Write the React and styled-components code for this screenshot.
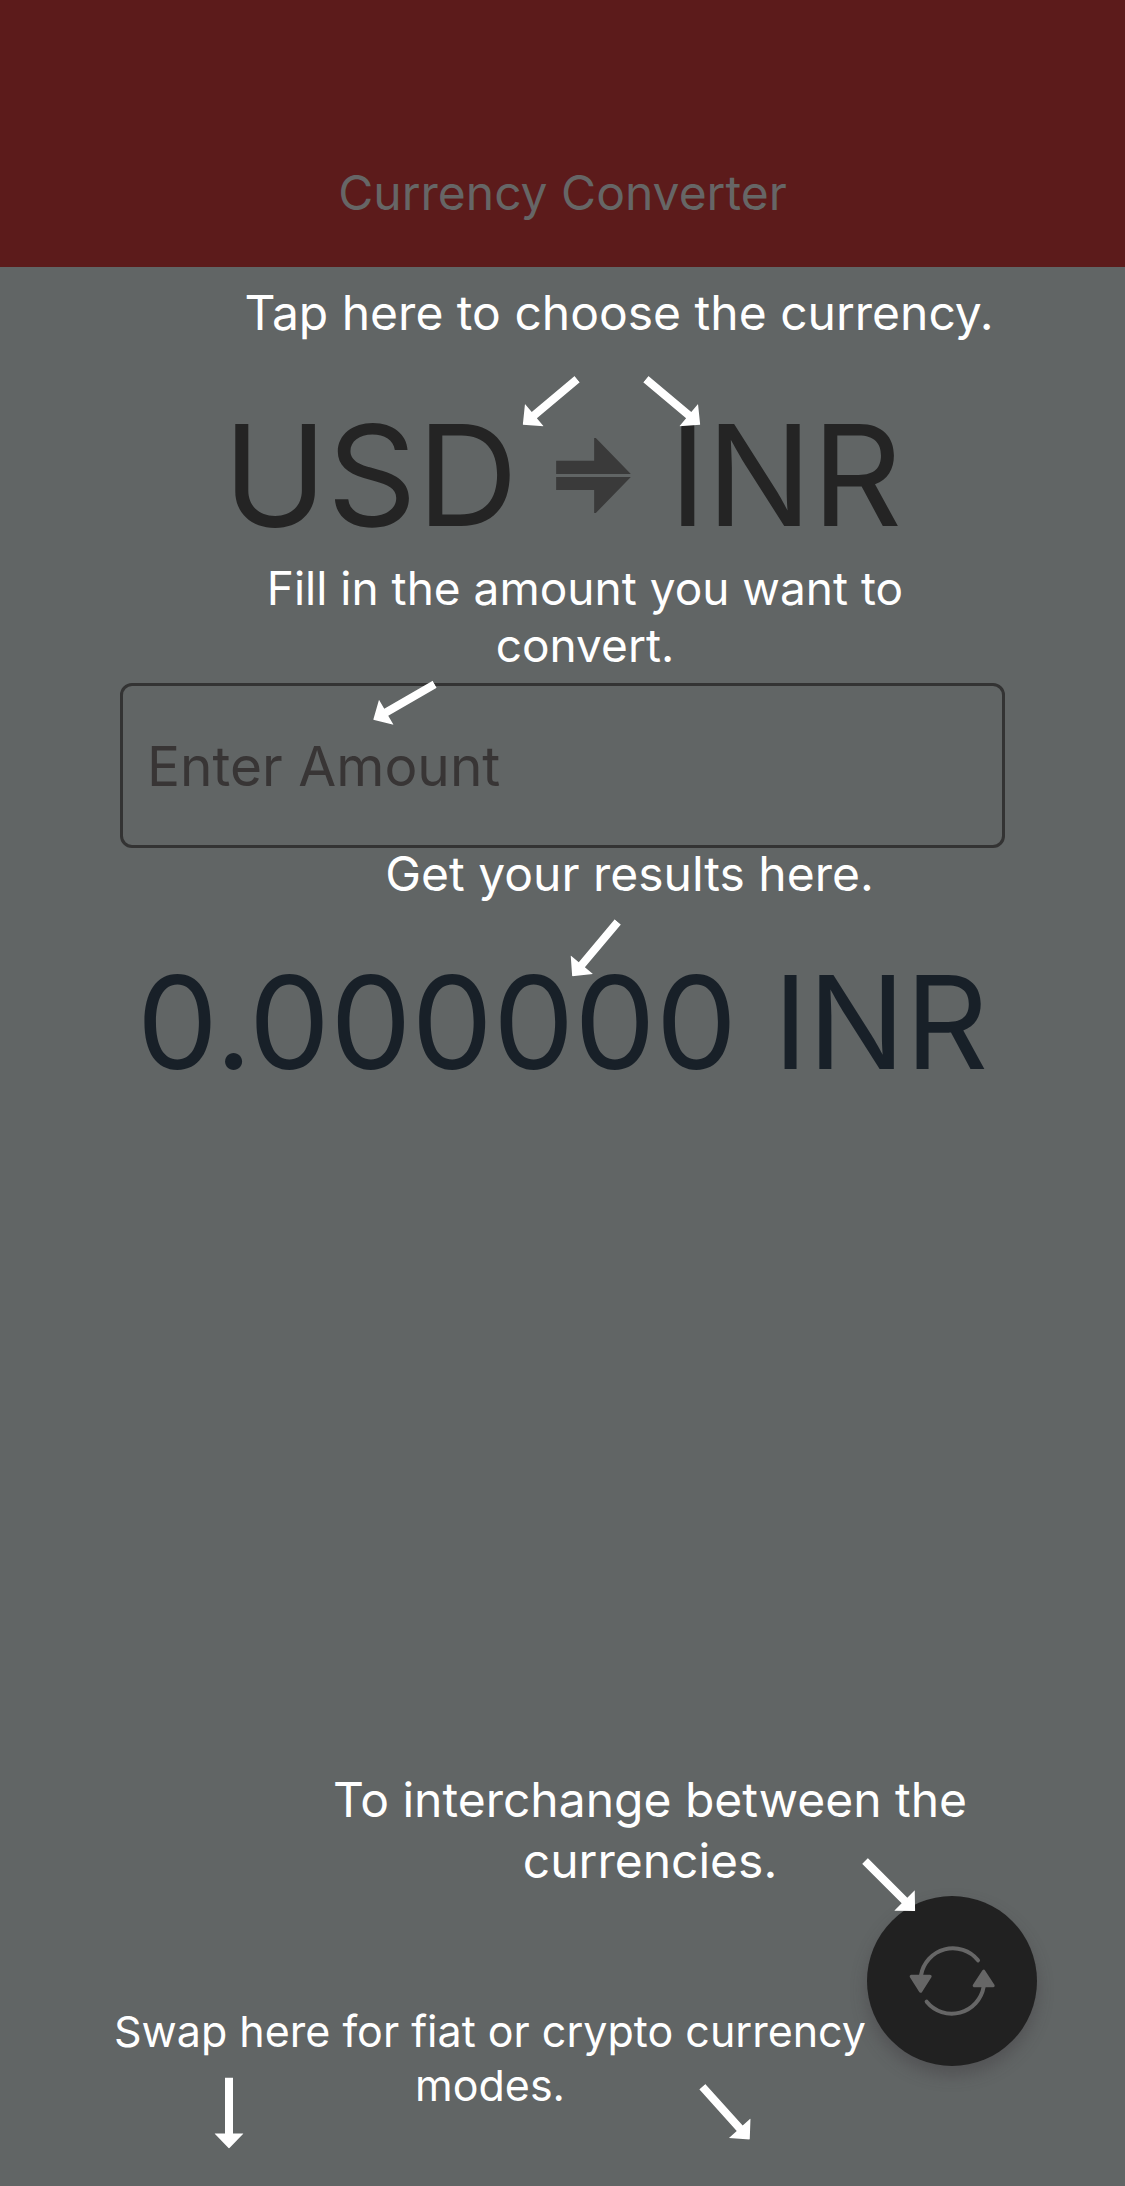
import React from "react";
import styled, { createGlobalStyle } from "styled-components";

const GlobalStyle = createGlobalStyle`
  *, *::before, *::after { box-sizing: border-box; }
  body {
    margin: 0;
    background: #616565;
    font-family: Inter, "Liberation Sans", sans-serif;
  }
  button, input { font: inherit; }
`;

const Screen = styled.div`
  display: flex;
  flex-direction: column;
  min-height: 100vh;
  background: #616565;
  color: #ffffff;
`;

const Header = styled.header`
  padding: 163px 24px 44px;
  background: #5c1b1b;
  text-align: center;
`;

const Title = styled.h1`
  margin: 0;
  font-size: 48px;
  line-height: 60px;
  font-weight: 400;
  color: #666666;
`;

const Main = styled.main`
  display: flex;
  flex: 1;
  flex-direction: column;
`;

const Hint = styled.p`
  position: relative;
  margin: ${(p) => p.$top || 0}px 0 0;
  padding-left: ${(p) => p.$shift || 0}px;
  font-size: ${(p) => p.$size || 48}px;
  line-height: ${(p) => p.$line || 60}px;
  text-align: center;
  white-space: nowrap;
`;

const PointerSvg = styled.svg`
  position: absolute;
  top: ${(p) => p.$y}px;
  left: calc(50% + ${(p) => p.$x}px);
  width: 29px;
  height: 71px;
  z-index: 1;
  transform: translate(-50%, -50%) rotate(${(p) => p.$angle}deg);
  pointer-events: none;
`;

function Pointer({ x, y, angle }) {
  return (
    <PointerSvg $x={x} $y={y} $angle={angle} viewBox="0 0 29 71" aria-hidden="true">
      <path d="M10.5 0h8v56H29L14.5 71 0 56h10.5z" fill="#fff" />
    </PointerSvg>
  );
}

const Pair = styled.div`
  display: flex;
  align-items: center;
  justify-content: center;
  gap: 38px;
  margin-top: 57px;
`;

const CurrencyButton = styled.button`
  padding: 0;
  border: 0;
  background: none;
  color: #242424;
  font-size: 140px;
  line-height: 150px;
  cursor: pointer;
`;

const Direction = styled.svg`
  width: 75px;
  height: 75px;
  fill: #3a3a3a;
`;

const AmountInput = styled.input`
  height: 165px;
  margin: 9px 120px 0;
  padding: 0 24px;
  border: 3px solid #333333;
  border-radius: 12px;
  background: transparent;
  color: #242424;
  font-size: 55px;
  outline: none;
  min-width: 0;

  &::placeholder { color: #383535; opacity: 1; }
`;

const Result = styled.output`
  display: block;
  margin-top: 47px;
  color: #182028;
  font-size: 129px;
  line-height: 150px;
  text-align: center;
  white-space: nowrap;
`;

const Footer = styled.footer`
  margin-top: auto;
  padding-bottom: 74px;
`;

const FooterRow = styled.div`
  display: flex;
  justify-content: space-between;
  height: 216px;
  margin-top: 5px;
  padding: 0 88px 0 113px;
`;

const ModeHint = styled(Hint)`
  display: flex;
  flex: 1;
  flex-direction: column;
  align-items: center;
  align-self: flex-end;
  min-width: 0;
`;

const SwapButton = styled.button`
  display: grid;
  flex: none;
  place-items: center;
  width: 170px;
  height: 170px;
  padding: 0;
  border: 0;
  border-radius: 50%;
  background: #212121;
  box-shadow: 0 9px 16px rgba(60, 56, 60, 0.4);
  cursor: pointer;
`;

const SwapIcon = styled.svg`
  width: 90px;
  height: 80px;
`;

export default function App() {
  return (
    <>
      <GlobalStyle />
      <Screen>
        <Header>
          <Title>Currency Converter</Title>
        </Header>
        <Main>
          <Hint $top={16} $shift={113}>
            Tap here to choose the currency.
            <Pointer x={-13} y={119} angle={50} />
            <Pointer x={110} y={119} angle={-50} />
          </Hint>
          <Pair>
            <CurrencyButton type="button">USD</CurrencyButton>
            <Direction viewBox="0 0 224 225" aria-hidden="true">
              <path d="M0 68h114V0h5l105 108H0zM0 117h224L119 225h-5v-69H0z" />
            </Direction>
            <CurrencyButton type="button">INR</CurrencyButton>
          </Pair>
          <Hint $top={10} $shift={45} $size={46} $line={57}>
            Fill in the amount you want to
            <br />
            convert.
            <Pointer x={-159} y={142} angle={60} />
          </Hint>
          <AmountInput
            type="text"
            inputMode="decimal"
            aria-label="Enter Amount"
            placeholder="Enter Amount"
          />
          <Hint $shift={134} $line={52}>
            Get your results here.
            <Pointer x={32} y={101} angle={40} />
          </Hint>
          <Result>0.000000 INR</Result>
          <Footer>
            <Hint $shift={175} $line={61}>
              To interchange between the
              <br />
              currencies.
              <Pointer x={327} y={117} angle={-45} />
            </Hint>
            <FooterRow>
              <ModeHint $size={43} $line={54}>
                <span>Swap here for fiat or crypto currency</span>
                <span>modes.</span>
                <Pointer x={-261} y={109} angle={0} />
                <Pointer x={236} y={109} angle={-42} />
              </ModeHint>
              <SwapButton type="button" aria-label="Interchange currencies">
                <SwapIcon viewBox="172 184 270 240" aria-hidden="true">
                  <g fill="none" stroke="#666" strokeWidth="12" strokeLinecap="round">
                    <path d="M385 242A97 97 0 0 0 214 287" />
                    <path d="M231 366A97 97 0 0 0 402 321" />
                  </g>
                  <g fill="#666" stroke="#666" strokeWidth="10" strokeLinejoin="round">
                    <path d="M185 290h56l-28 44z" />
                    <path d="M374 318h56l-28-43z" />
                  </g>
                </SwapIcon>
              </SwapButton>
            </FooterRow>
          </Footer>
        </Main>
      </Screen>
    </>
  );
}
